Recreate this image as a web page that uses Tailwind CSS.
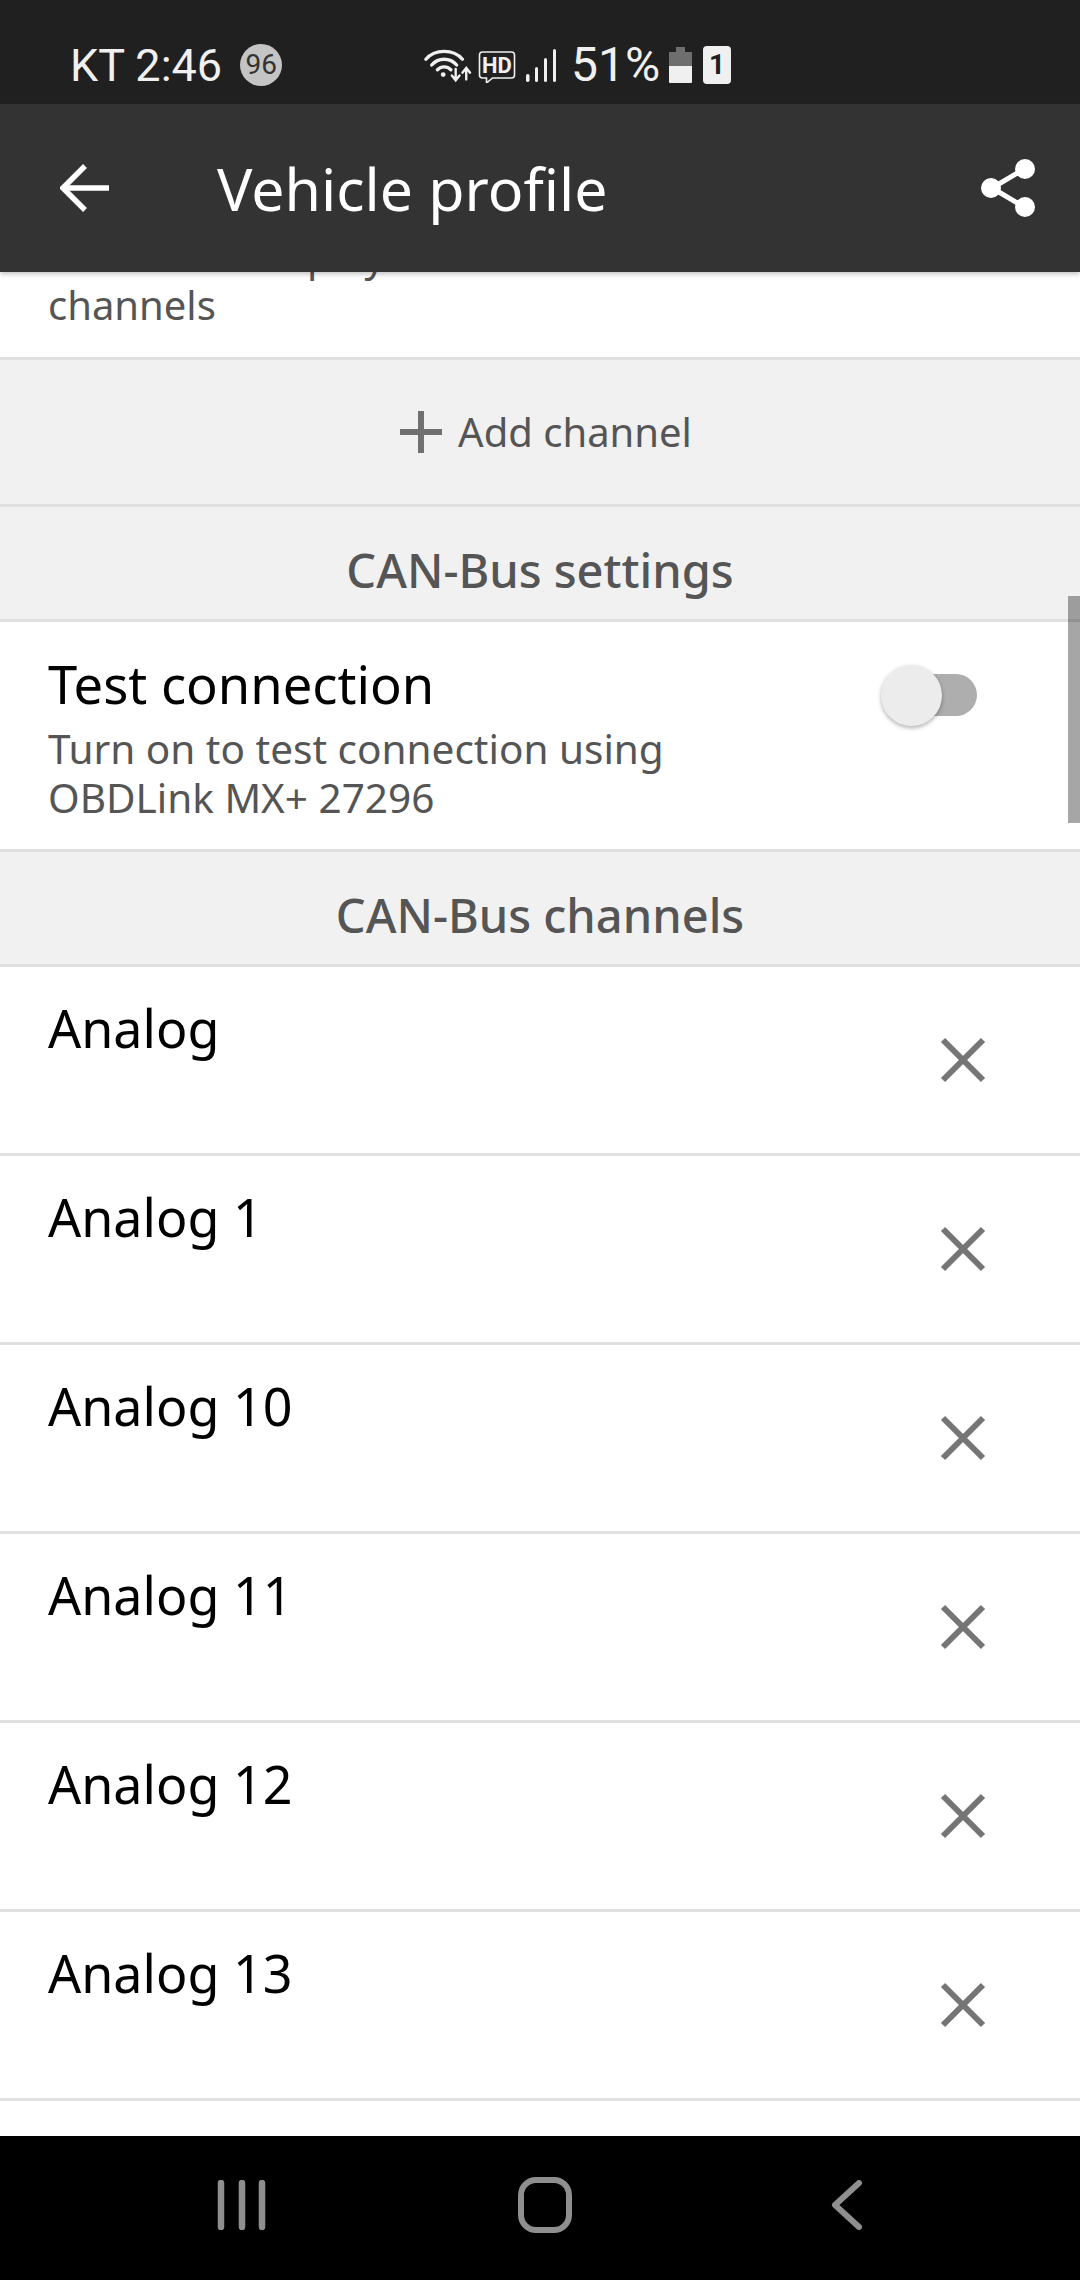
<!DOCTYPE html>
<html lang="en">
  <head>
    <meta charset="UTF-8" />
    <meta name="viewport" content="width=device-width, initial-scale=1.0" />
    <title>Vehicle profile</title>
    <script src="https://cdn.jsdelivr.net/npm/@tailwindcss/browser@4"></script>
  </head>

  <body class="bg-white">
    <div class="relative flex flex-col w-[1080px] h-[2280px] overflow-hidden font-['Noto_Sans',sans-serif]">
      <!-- Status bar -->
      <div class="relative h-[104px] shrink-0 bg-[#202020] text-[#f0f0f0] font-['Roboto',sans-serif] text-[45px] leading-none">
        <div class="flex items-center h-[42px] mt-[44px] pl-[70px] absolute top-0 left-0">
          <span>KT 2:46</span>
          <span class="flex items-center justify-center w-[42px] h-[42px] ml-[18px] rounded-full bg-[#c4c4c4] text-[#333] text-[28px]">96</span>
        </div>
        <div class="absolute top-[46px] left-[424px] flex items-center h-[38px]">
          <!-- wifi with up/down arrows -->
          <svg width="48" height="36" viewBox="0 0 50 36" fill="none" stroke="#f0f0f0" stroke-width="3.5" stroke-linecap="round">
            <path d="M2 12C11 1 31 1 40 12" />
            <path d="M8 18C15 10 27 10 34 18" />
            <path d="M14 23C18 19 24 19 28 23" />
            <circle cx="20" cy="28" r="2.5" fill="#f0f0f0" stroke="none" />
            <path d="M33 22V33M29 29L33 34L37 29" stroke-width="2.5" />
            <path d="M44 33V23M40 26L44 21L48 26" stroke-width="2.5" />
          </svg>
          <!-- HD call bubble -->
          <svg class="ml-[6px]" width="38" height="36" viewBox="0 0 37 36" fill="none">
            <path d="M4 5H33Q36 5 36 8V28Q36 31 33 31H14L8 36V31H4Q1 31 1 28V8Q1 5 4 5Z" stroke="#f0f0f0" stroke-width="1.6" />
            <text x="18.5" y="26" text-anchor="middle" fill="#f0f0f0" font-family="Roboto, sans-serif" font-size="22" font-weight="700">HD</text>
          </svg>
          <!-- signal bars -->
          <svg class="ml-[9px]" width="32" height="36" viewBox="0 0 32 36" fill="#f0f0f0">
            <rect x="1" y="27" width="3.5" height="8" rx="1.7" />
            <rect x="10" y="20" width="3" height="15" rx="1.5" />
            <rect x="19" y="11" width="3" height="24" rx="1.5" />
            <rect x="28" y="2" width="3" height="33" rx="1.5" />
          </svg>
          <span class="ml-[14px] text-[48px]">51%</span>
          <!-- battery -->
          <svg class="ml-[8px]" width="25" height="38" viewBox="0 0 25 38">
            <path d="M8 1H17V6H24V20H1V6H8Z" fill="#6e6e6e" />
            <path d="M1 20H24V36Q24 37 23 37H2Q1 37 1 36Z" fill="#f0f0f0" />
          </svg>
          <!-- SIM slot -->
          <span class="flex items-center justify-center w-[28px] h-[38px] ml-[10px] rounded-[4px] bg-[#f0f0f0] text-[#202020] text-[28px] font-bold">1</span>
        </div>
      </div>

      <!-- Toolbar -->
      <div class="relative z-10 flex items-center h-[168px] shrink-0 bg-[#333333] shadow-[0_2px_5px_rgba(0,0,0,0.25)]">
        <svg class="ml-[60px] mt-[-1px]" width="50" height="50" viewBox="0 0 50 50" fill="none" stroke="#fff" stroke-width="5.5">
          <path d="M49 25H5" />
          <path d="M25 3L3 25L25 47" />
        </svg>
        <span class="ml-[107px] text-white text-[59px] leading-none">Vehicle profile</span>
        <svg class="absolute left-[980px] top-[54px]" width="56" height="60" viewBox="0 0 56 60" fill="#fff">
          <path d="M44 11L12 30L44 49" fill="none" stroke="#fff" stroke-width="5" />
          <circle cx="45" cy="11" r="10" />
          <circle cx="11" cy="30" r="10" />
          <circle cx="45" cy="49" r="10" />
        </svg>
      </div>

      <!-- Scrolling settings list -->
      <div class="relative flex-1 overflow-hidden">
        <div class="h-[88px] overflow-hidden border-b-[3px] border-[#e0e0e0] px-[48px] text-[#555] text-[40px] leading-[49px]">
          <div class="mt-[-41px]">Turn on to display a selection of</div>
          <div>channels</div>
        </div>

        <div class="flex items-center justify-center h-[147px] border-b-[3px] border-[#e0e0e0] bg-[#f1f1f1] text-[#555] text-[40px] pl-[12px]">
          <svg width="42" height="42" viewBox="0 0 42 42" fill="#707070">
            <rect x="18" y="0" width="6" height="42" />
            <rect x="0" y="18" width="42" height="6" />
          </svg>
          <span class="ml-[16px]">Add channel</span>
        </div>

        <div class="flex items-center justify-center h-[115px] border-b-[3px] border-[#e0e0e0] bg-[#f1f1f1] text-[#555] text-[47px] font-medium pt-[14px]">CAN-Bus settings</div>

        <div class="relative h-[230px] border-b-[3px] border-[#e0e0e0] px-[48px]">
          <div class="pt-[32px] text-black text-[52.5px] leading-[60px]">Test connection</div>
          <div class="mt-[10px] text-[#555] text-[40.5px] leading-[49px]">Turn on to test connection using<br />OBDLink MX+ 27296</div>
          <!-- off-state switch -->
          <div class="absolute left-[885px] top-[52px] w-[92px] h-[42px] rounded-full bg-[#aeaeae]"></div>
          <div class="absolute left-[881px] top-[43px] w-[61px] h-[61px] rounded-full bg-[#ececec] shadow-[0_2px_4px_rgba(0,0,0,0.3)]"></div>
        </div>

        <div class="flex items-center justify-center h-[115px] border-b-[3px] border-[#e0e0e0] bg-[#f1f1f1] text-[#555] text-[47px] font-medium pt-[14px]">CAN-Bus channels</div>

        <!-- Channel rows -->
        <div class="relative h-[189px] border-b-[3px] border-[#e0e0e0] pl-[48px] pt-[31px] text-black text-[52px] leading-[60px]">
          Analog
          <svg class="absolute left-[940px] top-[70px]" width="46" height="46" viewBox="0 0 46 46" fill="none" stroke="#757575" stroke-width="6"><path d="M3 3L43 43M43 3L3 43" /></svg>
        </div>
        <div class="relative h-[189px] border-b-[3px] border-[#e0e0e0] pl-[48px] pt-[31px] text-black text-[52px] leading-[60px]">
          Analog 1
          <svg class="absolute left-[940px] top-[70px]" width="46" height="46" viewBox="0 0 46 46" fill="none" stroke="#757575" stroke-width="6"><path d="M3 3L43 43M43 3L3 43" /></svg>
        </div>
        <div class="relative h-[189px] border-b-[3px] border-[#e0e0e0] pl-[48px] pt-[31px] text-black text-[52px] leading-[60px]">
          Analog 10
          <svg class="absolute left-[940px] top-[70px]" width="46" height="46" viewBox="0 0 46 46" fill="none" stroke="#757575" stroke-width="6"><path d="M3 3L43 43M43 3L3 43" /></svg>
        </div>
        <div class="relative h-[189px] border-b-[3px] border-[#e0e0e0] pl-[48px] pt-[31px] text-black text-[52px] leading-[60px]">
          Analog 11
          <svg class="absolute left-[940px] top-[70px]" width="46" height="46" viewBox="0 0 46 46" fill="none" stroke="#757575" stroke-width="6"><path d="M3 3L43 43M43 3L3 43" /></svg>
        </div>
        <div class="relative h-[189px] border-b-[3px] border-[#e0e0e0] pl-[48px] pt-[31px] text-black text-[52px] leading-[60px]">
          Analog 12
          <svg class="absolute left-[940px] top-[70px]" width="46" height="46" viewBox="0 0 46 46" fill="none" stroke="#757575" stroke-width="6"><path d="M3 3L43 43M43 3L3 43" /></svg>
        </div>
        <div class="relative h-[189px] border-b-[3px] border-[#e0e0e0] pl-[48px] pt-[31px] text-black text-[52px] leading-[60px]">
          Analog 13
          <svg class="absolute left-[940px] top-[70px]" width="46" height="46" viewBox="0 0 46 46" fill="none" stroke="#757575" stroke-width="6"><path d="M3 3L43 43M43 3L3 43" /></svg>
        </div>

        <!-- Scrollbar thumb -->
        <div class="absolute right-0 top-[324px] w-[12px] h-[227px] bg-[#000]/35"></div>
      </div>

      <!-- Navigation bar -->
      <div class="relative h-[144px] shrink-0 bg-black">
        <svg class="absolute left-[217px] top-[44px]" width="50" height="50" viewBox="0 0 50 50" stroke="#8f8f8f" stroke-width="6.5" stroke-linecap="round" fill="none">
          <path d="M4 3V47M25 3V47M45 3V47" />
        </svg>
        <svg class="absolute left-[518px] top-[41px]" width="54" height="56" viewBox="0 0 54 56" fill="none" stroke="#8f8f8f" stroke-width="6">
          <rect x="3" y="3" width="48" height="50" rx="15" />
        </svg>
        <svg class="absolute left-[830px] top-[44px]" width="34" height="50" viewBox="0 0 34 50" fill="none" stroke="#8f8f8f" stroke-width="6" stroke-linecap="round" stroke-linejoin="round">
          <path d="M29 3L5 25L29 47" />
        </svg>
      </div>
    </div>
  </body>
</html>
